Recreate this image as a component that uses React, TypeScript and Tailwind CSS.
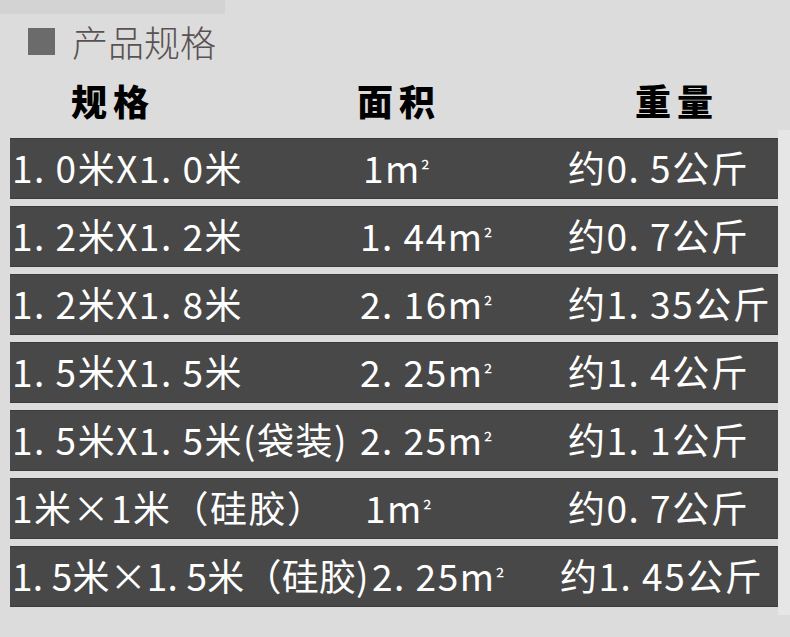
import React from "react";

type Row = {
  size: string;
  area: string;
  weight: string;
  c1: string;
  c2: string;
};

const Area = ({ v }: { v: string }) => (
  <>
    {v}m
    <span className="relative -top-[4px] text-[22px] leading-none tracking-normal">²</span>
  </>
);

const rows: Row[] = [
  { size: "1. 0米X1. 0米", area: "1", weight: "约0. 5公斤", c1: "w-[351px]", c2: "w-[205px]" },
  { size: "1. 2米X1. 2米", area: "1. 44", weight: "约0. 7公斤", c1: "w-[348px]", c2: "w-[208px]" },
  { size: "1. 2米X1. 8米", area: "2. 16", weight: "约1. 35公斤", c1: "w-[348px]", c2: "w-[208px]" },
  { size: "1. 5米X1. 5米", area: "2. 25", weight: "约1. 4公斤", c1: "w-[348px]", c2: "w-[208px]" },
  { size: "1. 5米X1. 5米(袋装)", area: "2. 25", weight: "约1. 1公斤", c1: "w-[348px]", c2: "w-[208px]" },
  { size: "1米×1米（硅胶）", area: "1", weight: "约0. 7公斤", c1: "w-[353px]", c2: "w-[203px]" },
  { size: "1. 5米×1. 5米（硅胶)", area: "2. 25", weight: "约1. 45公斤", c1: "w-[360px] tracking-[0.2px]", c2: "w-[188px]" },
];

export default function App() {
  return (
    <div
      className="w-[790px] h-[637px] bg-[#dcdcdc] overflow-hidden relative"
      style={{ fontFamily: '"Noto Sans CJK SC", "Noto Sans", sans-serif' }}
    >
      <div className="absolute left-0 top-0 w-[225px] h-[14px] bg-[#d3d3d3]" />
      <div className="absolute right-0 top-[130px] w-[12px] h-[485px] bg-[#e6e6e6]" />

      {/* title */}
      <div className="relative flex items-center pl-[28px] pt-[20px] h-[62px]">
        <div className="w-[27px] h-[27px] bg-[#6b6b6b]" />
        <span className="ml-[17px] text-[36px] leading-none font-light text-[#5a5252]">产品规格</span>
      </div>

      {/* header */}
      <div className="relative flex items-center h-[76px] font-black text-[36px] leading-none text-black tracking-[6px]">
        <span className="ml-[71px]">规格</span>
        <span className="ml-[202px]">面积</span>
        <span className="ml-[194px]">重量</span>
      </div>

      {/* rows */}
      <div className="relative flex flex-col gap-[7px] ml-[10px] w-[768px]">
        {rows.map((r, i) => (
          <div
            key={i}
            className="h-[61px] bg-[#484848] border-y border-[#3a3a3a] flex items-center pl-[2px] pb-[2px] text-white text-[37px] leading-none tracking-[1.5px] whitespace-nowrap"
          >
            <span className={r.c1}>{r.size}</span>
            <span className={r.c2}>
              <Area v={r.area} />
            </span>
            <span>{r.weight}</span>
          </div>
        ))}
      </div>
    </div>
  );
}
